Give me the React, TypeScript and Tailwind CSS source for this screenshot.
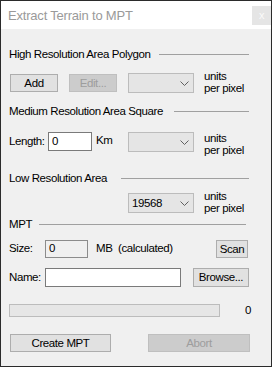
import React from 'react';

function Chevron({ color = '#606060' }: { color?: string }) {
  return (
    <svg width="9" height="5" viewBox="0 0 9 5" className="shrink-0">
      <polyline points="0.5,0.5 4.5,4.5 8.5,0.5" fill="none" stroke={color} strokeWidth="1" />
    </svg>
  );
}

function Combo({ value }: { value?: string }) {
  return (
    <div className="w-[66px] h-[20px] bg-[#e5e5e5] border border-[#bcbcbc] flex items-center justify-between pl-[3px] pr-[4px] shrink-0">
      <span className="leading-[14px]">{value}</span>
      <Chevron />
    </div>
  );
}

function Units() {
  return (
    <div className="ml-[10px] leading-[12px] -mt-[2px] whitespace-nowrap shrink-0">
      <div>units</div>
      <div>per pixel</div>
    </div>
  );
}

function Heading({ text, line, end = 22 }: { text: string; line: number; end?: number }) {
  return (
    <div className="flex items-center justify-between h-[14px] pl-[8px]" style={{ paddingRight: end }}>
      <span className="leading-[14px] whitespace-nowrap shrink-0">{text}</span>
      <div className="h-px bg-[#a0a0a0] shrink-0" style={{ width: line }} />
    </div>
  );
}

export default function App() {
  return (
    <div
      className="w-[272px] h-[367px] border border-[#2b2b2b] bg-[#f0f0f0] text-[11.5px] tracking-[-0.4px] text-black overflow-hidden whitespace-nowrap"
      style={{ fontFamily: '"Liberation Sans", Arial, sans-serif' }}
    >
      <div className="h-[28px] bg-white flex items-start justify-between">
        <span className="ml-[7px] mt-[7px] text-[13px] leading-[16px] tracking-[-0.2px] text-[#9a9a9a]">Extract Terrain to MPT</span>
        <div className="mt-[5px] w-[19px] h-[19px] bg-[#e5e5e5] flex items-center justify-center text-[11px] leading-none text-[#fafafa]">
          x
        </div>
      </div>

      <div className="mt-[18px]">
        <Heading text="High Resolution Area Polygon" line={90} />
      </div>

      <div className="mt-[11px] h-[21px] flex items-start pl-[9px]">
        <button className="mt-[2px] w-[48px] h-[18px] bg-[#e1e1e1] border border-[#adadad] leading-[14px] shrink-0">Add</button>
        <button className="mt-[2px] ml-[11px] w-[48px] h-[18px] bg-[#cccccc] border border-[#bfbfbf] text-[#9d9d9d] leading-[14px] shrink-0">
          Edit...
        </button>
        <div className="ml-[11px] mt-[1px]">
          <Combo />
        </div>
        <Units />
      </div>

      <div className="mt-[11px]">
        <Heading text="Medium Resolution Area Square" line={75} />
      </div>

      <div className="mt-[14px] h-[20px] flex items-start pl-[8px]">
        <span className="w-[39px] leading-[19px] shrink-0">Length:</span>
        <div className="w-[44px] h-[19px] bg-white border border-[#7a7a7a] pl-[3px] leading-[17px] shrink-0">0</div>
        <span className="ml-[4px] w-[32px] leading-[17px] shrink-0">Km</span>
        <Combo />
        <div className="mt-[2px]">
          <Units />
        </div>
      </div>

      <div className="mt-[19px]">
        <Heading text="Low Resolution Area" line={128} />
      </div>

      <div className="mt-[7px] h-[21px] flex items-start pl-[127px]">
        <div className="mt-[1px]">
          <Combo value="19568" />
        </div>
        <Units />
      </div>

      <div className="mt-[4px]">
        <Heading text="MPT" line={207} end={25} />
      </div>

      <div className="mt-[9px] h-[18px] flex items-center pl-[8px]">
        <span className="w-[36px] shrink-0">Size:</span>
        <div className="w-[43px] h-[18px] border border-[#8c8c8c] pl-[3px] leading-[14px] shrink-0">0</div>
        <span className="ml-[8px] w-[120px] shrink-0">MB&nbsp; (calculated)</span>
        <button className="w-[32px] h-[18px] bg-[#e1e1e1] border border-[#adadad] leading-[14px] shrink-0">Scan</button>
      </div>

      <div className="mt-[10px] h-[19px] flex items-center pl-[8px]">
        <span className="w-[36px] shrink-0">Name:</span>
        <div className="w-[136px] h-[19px] bg-white border border-[#7a7a7a] shrink-0" />
        <button className="ml-[12px] w-[56px] h-[19px] bg-[#e1e1e1] border border-[#adadad] leading-[15px] shrink-0">Browse...</button>
      </div>

      <div className="mt-[17px] h-[13px] flex items-center pl-[8px]">
        <div className="w-[211px] h-[13px] bg-[#e6e6e6] border border-[#bcbcbc] shrink-0" />
        <span className="ml-[25px]">0</span>
      </div>

      <div className="mt-[17px] h-[18px] flex items-center pl-[9px]">
        <button className="w-[101px] h-[18px] bg-[#e1e1e1] border border-[#adadad] leading-[14px] shrink-0">Create MPT</button>
        <button className="ml-[37px] w-[102px] h-[18px] bg-[#cccccc] border border-[#bfbfbf] text-[#9d9d9d] leading-[14px] shrink-0">
          Abort
        </button>
      </div>
    </div>
  );
}
